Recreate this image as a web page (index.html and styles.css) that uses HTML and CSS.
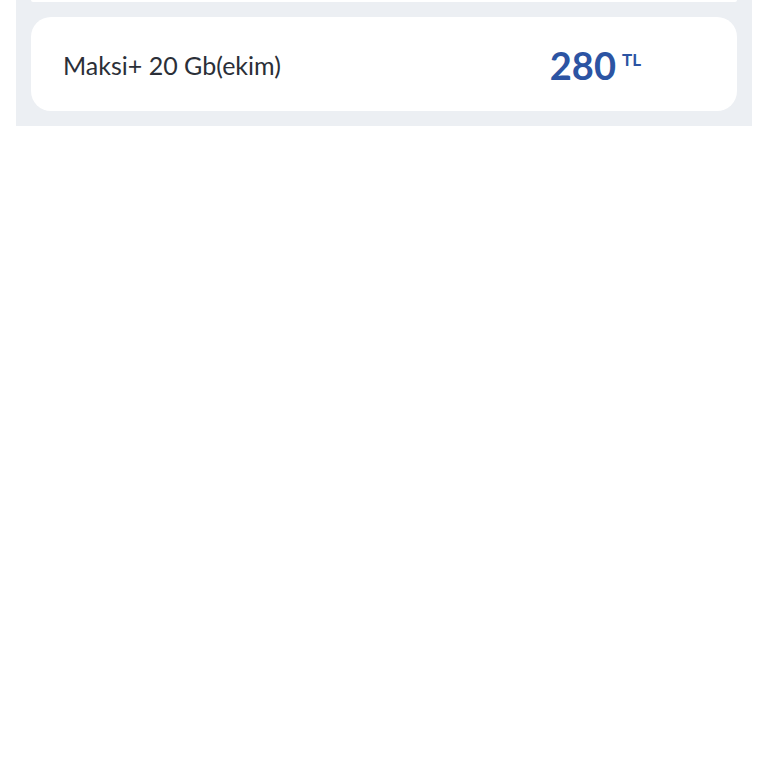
FILE: index.html
```html
<!DOCTYPE html>
<html lang="tr">
<head>
    <meta charset="UTF-8">
    <meta name="viewport" content="width=device-width, initial-scale=1.0">
    <title>Paketler</title>
    <link rel="stylesheet" href="styles.css">
</head>
<body>
    <div class="panel">
        <div class="card card-prev"></div>
        <div class="card">
            <span class="name">Maksi+ 20 Gb(ekim)</span>
            <span class="price">280<sup>TL</sup></span>
        </div>
    </div>
</body>
</html>
```

FILE: styles.css
```css
body {
    margin: 0;
    background: #ffffff;
    font-family: Lato, "Noto Sans", sans-serif;
}
.panel {
    margin: 0 16px;
    padding: 0 15px 15px;
    background-color: #eceff3;
    display: flex;
    flex-direction: column;
    gap: 15px;
}
.card {
    background: white;
    border-radius: 20px;
    height: 94px;
    display: flex;
    align-items: center;
    justify-content: space-between;
    padding: 0 96px 0 32px;
}
.card-prev {
    height: 2px;
    border-radius: 0 0 2px 2px;
}
.name {
    font-size: 25px;
    color: #2b2f38;
    padding-top: 2px;
}
.price {
    font-size: 38px;
    font-weight: bold;
    color: #2c54a3;
    padding-top: 2px;
}
.price sup {
    font-size: 17px;
    margin-left: 6px;
    vertical-align: 14px;
}
```
